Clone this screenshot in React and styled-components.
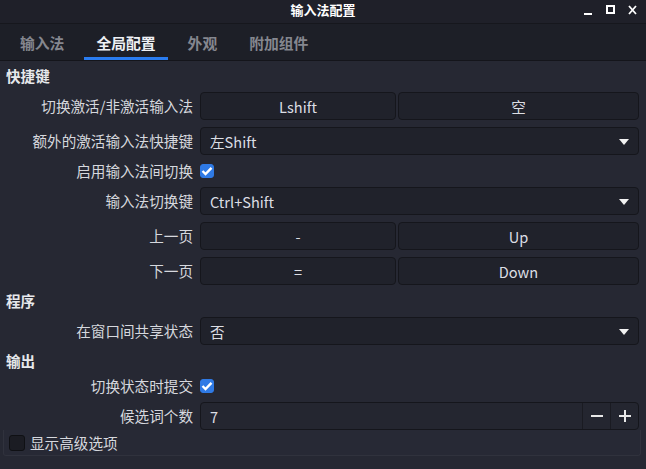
import React from 'react';
import styled, { createGlobalStyle } from 'styled-components';

const GlobalStyle = createGlobalStyle`
  html, body {
    margin: 0;
    padding: 0;
    background: #262833;
  }
  * {
    box-sizing: border-box;
  }
`;

const Window = styled.div`
  width: 646px;
  height: 469px;
  background: #262833;
  color: #d6d8de;
  font-family: "Noto Sans CJK SC", "Noto Sans", sans-serif;
  font-size: 14.6px;
  overflow: hidden;
  display: flex;
  flex-direction: column;
`;

const TitleBar = styled.div`
  height: 24px;
  flex-shrink: 0;
  background: #1f2029;
  border-bottom: 1px solid #16171d;
  position: relative;
  display: flex;
  align-items: center;
  justify-content: center;
`;

const TitleText = styled.div`
  color: #ffffff;
  font-weight: bold;
  font-size: 13px;
  line-height: 1;
  margin-top: -4px;
`;

const Controls = styled.div`
  position: absolute;
  right: 8px;
  top: 4px;
  display: flex;
  gap: 12px;
  align-items: center;
`;

const CtrlIcon = styled.svg`
  width: 10px;
  height: 12px;
  display: block;
`;

const TabBar = styled.div`
  height: 37px;
  flex-shrink: 0;
  background: #1d1f27;
  border-bottom: 1px solid #14151b;
  display: flex;
  gap: 8px;
  padding-left: 8px;
`;

const Tab = styled.div`
  padding: 3px 12px 0;
  display: flex;
  align-items: center;
  font-weight: bold;
  font-size: 14.8px;
  color: ${(p) => (p.active ? '#eef0f4' : '#85878f')};
  border-bottom: 3px solid ${(p) => (p.active ? '#2a7cf0' : 'transparent')};
`;

const Form = styled.div`
  display: grid;
  grid-template-columns: 193px 439px;
  column-gap: 7px;
  row-gap: 7px;
  padding-top: 6px;
  align-items: center;
`;

const SectionTitle = styled.div`
  grid-column: 1 / span 2;
  height: 18px;
  line-height: 18px;
  padding-left: 6px;
  font-weight: bold;
  color: #e6e8ec;
  overflow: visible;
`;

const Label = styled.div`
  height: 18px;
  text-align: right;
  white-space: nowrap;
  line-height: 18px;
`;

const Pair = styled.div`
  display: flex;
  gap: 2px;
  height: 28px;
`;

const KeyButton = styled.div`
  flex: ${(p) => (p.fixed ? '0 0 196px' : '1')};
  background: #20222b;
  border: 1px solid #15161c;
  border-radius: 4px;
  display: flex;
  align-items: center;
  justify-content: center;
  color: #dcdee4;
`;

const Select = styled.div`
  height: 28px;
  background: #20222b;
  border: 1px solid #15161c;
  border-radius: 4px;
  display: flex;
  align-items: center;
  justify-content: space-between;
  padding: 0 9px 0 9px;
  color: #dcdee4;
`;

const Arrow = styled.div`
  width: 0;
  height: 0;
  border-left: 5px solid transparent;
  border-right: 5px solid transparent;
  border-top: 6px solid #f2f2f2;
  margin-top: 1px;
`;

const CheckCell = styled.div`
  height: 18px;
  display: flex;
  align-items: center;
`;

const CheckBox = styled.div`
  width: ${(p) => (p.checked ? 14 : 16)}px;
  height: ${(p) => (p.checked ? 14 : 16)}px;
  border-radius: 3px;
  background: ${(p) => (p.checked ? '#2f7ae5' : '#1b1c23')};
  border: 1px solid ${(p) => (p.checked ? '#2f7ae5' : '#0f1014')};
  display: flex;
  align-items: center;
  justify-content: center;
`;

const SpinBox = styled.div`
  height: 28px;
  background: #242630;
  border: 1px solid #15161c;
  border-radius: 4px;
  display: flex;
  align-items: stretch;
  overflow: hidden;
`;

const SpinValue = styled.div`
  flex: 1;
  display: flex;
  align-items: center;
  padding-left: 9px;
  color: #dcdee4;
`;

const SpinButton = styled.div`
  width: 28px;
  border-left: 1px solid #1a1b22;
  display: flex;
  align-items: center;
  justify-content: center;
`;

const Advanced = styled.div`
  margin: 0 5px 0 3px;
  height: 26px;
  border: 1px solid #30323d;
  border-top: none;
  border-radius: 0 0 3px 3px;
  background: #272935;
  display: flex;
  align-items: center;
  gap: 5px;
  padding-left: 5px;
`;

const Check = () => (
  <svg width="12" height="10" viewBox="0 0 12 10">
    <path d="M1.5 5 L4.5 8 L10.5 1.8" stroke="#fff" strokeWidth="2.4" fill="none" />
  </svg>
);

export default function App() {
  return (
    <>
      <GlobalStyle />
      <Window>
        <TitleBar>
          <TitleText>输入法配置</TitleText>
          <Controls>
            <CtrlIcon viewBox="0 0 10 12">
              <rect x="0" y="9" width="8" height="2" fill="#fff" />
            </CtrlIcon>
            <CtrlIcon viewBox="0 0 10 12">
              <rect x="1" y="2" width="7" height="7" stroke="#fff" strokeWidth="2" fill="none" />
            </CtrlIcon>
            <CtrlIcon viewBox="0 0 10 12">
              <path d="M1 2 L8 10 M8 2 L1 10" stroke="#fff" strokeWidth="1.8" />
            </CtrlIcon>
          </Controls>
        </TitleBar>
        <TabBar>
          <Tab>输入法</Tab>
          <Tab active>全局配置</Tab>
          <Tab>外观</Tab>
          <Tab>附加组件</Tab>
        </TabBar>
        <Form>
          <SectionTitle>快捷键</SectionTitle>

          <Label>切换激活/非激活输入法</Label>
          <Pair>
            <KeyButton fixed>Lshift</KeyButton>
            <KeyButton>空</KeyButton>
          </Pair>

          <Label>额外的激活输入法快捷键</Label>
          <Select>
            <span>左Shift</span>
            <Arrow />
          </Select>

          <Label>启用输入法间切换</Label>
          <CheckCell>
            <CheckBox checked><Check /></CheckBox>
          </CheckCell>

          <Label>输入法切换键</Label>
          <Select>
            <span>Ctrl+Shift</span>
            <Arrow />
          </Select>

          <Label>上一页</Label>
          <Pair>
            <KeyButton fixed>-</KeyButton>
            <KeyButton>Up</KeyButton>
          </Pair>

          <Label>下一页</Label>
          <Pair>
            <KeyButton fixed>=</KeyButton>
            <KeyButton>Down</KeyButton>
          </Pair>

          <SectionTitle>程序</SectionTitle>

          <Label>在窗口间共享状态</Label>
          <Select>
            <span>否</span>
            <Arrow />
          </Select>

          <SectionTitle>输出</SectionTitle>

          <Label>切换状态时提交</Label>
          <CheckCell>
            <CheckBox checked><Check /></CheckBox>
          </CheckCell>

          <Label>候选词个数</Label>
          <SpinBox>
            <SpinValue>7</SpinValue>
            <SpinButton>
              <svg width="12" height="12" viewBox="0 0 12 12">
                <rect x="0" y="5" width="12" height="2" fill="#e8e8e8" />
              </svg>
            </SpinButton>
            <SpinButton>
              <svg width="12" height="12" viewBox="0 0 12 12">
                <rect x="0" y="5" width="12" height="2" fill="#e8e8e8" />
                <rect x="5" y="0" width="2" height="12" fill="#e8e8e8" />
              </svg>
            </SpinButton>
          </SpinBox>
        </Form>
        <Advanced>
          <CheckBox />
          <span>显示高级选项</span>
        </Advanced>
      </Window>
    </>
  );
}
